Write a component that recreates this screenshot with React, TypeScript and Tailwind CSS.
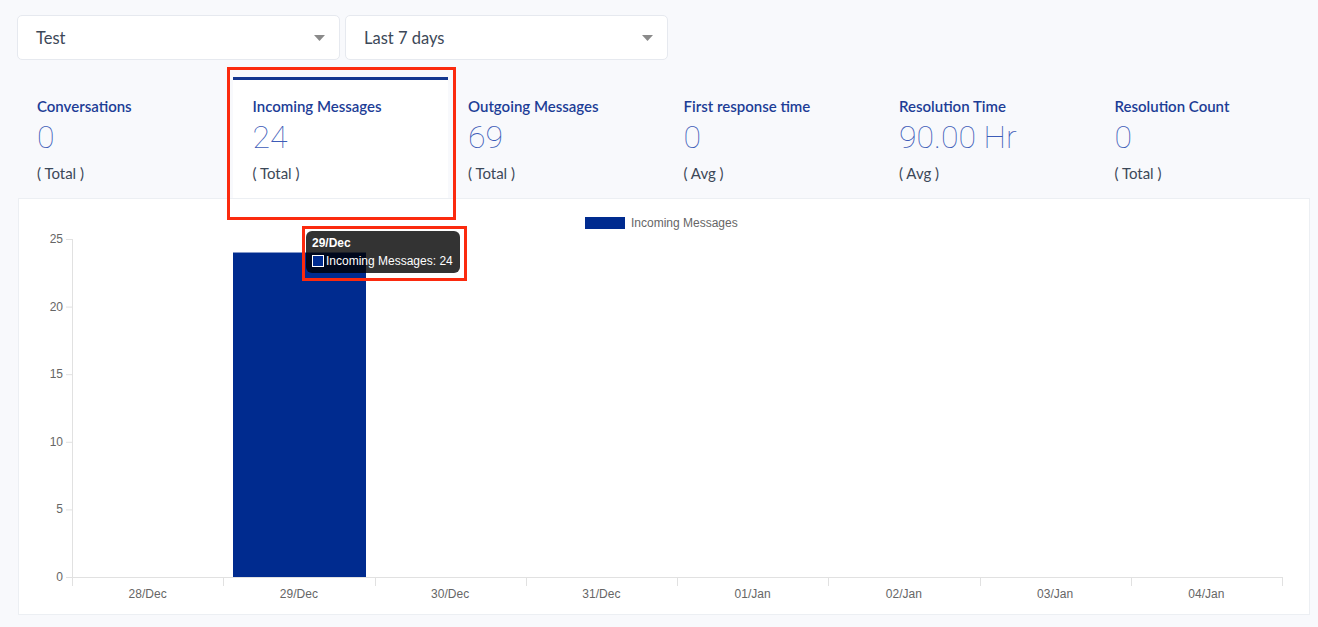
import React from "react";

const metrics = [
  { title: "Conversations", value: "0", sub: "( Total )" },
  { title: "Incoming Messages", value: "24", sub: "( Total )", active: true },
  { title: "Outgoing Messages", value: "69", sub: "( Total )" },
  { title: "First response time", value: "0", sub: "( Avg )" },
  { title: "Resolution Time", value: "90.00 Hr", sub: "( Avg )" },
  { title: "Resolution Count", value: "0", sub: "( Total )" },
];

const xLabels = ["28/Dec", "29/Dec", "30/Dec", "31/Dec", "01/Jan", "02/Jan", "03/Jan", "04/Jan"];
const yLabels = [25, 20, 15, 10, 5, 0];

function Select({ label }: { label: string }) {
  return (
    <div className="flex h-[45px] w-[323px] items-center justify-between rounded-[5px] border border-[#e6e9ef] bg-white pl-[18px] pr-[14px]">
      <span className="pt-[2px] text-[16.5px] text-[#3c4858]" style={{ fontFamily: "Lato, sans-serif" }}>{label}</span>
      <svg width="11" height="6" viewBox="0 0 11 6">
        <polygon points="0,0 11,0 5.5,6" fill="#8a8a8a" />
      </svg>
    </div>
  );
}

function Chart() {
  const left = 54;
  const right = 1264;
  const axisY = 378;
  const top = 40;
  const step = (right - left) / 8;
  const unit = (axisY - top) / 25;
  return (
    <svg width="1292" height="417" className="absolute -left-px top-0" style={{ fontFamily: "'Liberation Sans', Arial, sans-serif" }}>
      <rect x="567" y="18" width="40" height="12" fill="#002b8f" />
      <text x="613" y="28" fontSize="12" fill="#666">Incoming Messages</text>
      <line x1={left + 0.5} y1={top} x2={left + 0.5} y2={axisY + 9} stroke="#e1e1e1" strokeWidth="1" />
      {yLabels.map((v) => {
        const y = axisY - v * unit;
        return (
          <g key={v}>
            <line x1={left - 6} y1={y + 0.5} x2={left} y2={y + 0.5} stroke="#e1e1e1" />
            <text x={left - 9} y={y + 4} fontSize="12" fill="#666" textAnchor="end">{v}</text>
          </g>
        );
      })}
      <rect x={215} y={axisY - 24 * unit} width={133} height={24 * unit} fill="#002b8f" />
      <line x1={left - 6} y1={axisY + 0.5} x2={right} y2={axisY + 0.5} stroke="#e1e1e1" />
      {Array.from({ length: 9 }).map((_, i) => {
        const x = Math.round(left + i * step) + 0.5;
        return <line key={i} x1={x} y1={axisY} x2={x} y2={axisY + 9} stroke="#e1e1e1" />;
      })}
      {xLabels.map((l, i) => (
        <text key={l} x={left + i * step + step / 2} y={399} fontSize="12" fill="#666" textAnchor="middle">{l}</text>
      ))}
    </svg>
  );
}

export default function App() {
  return (
    <div className="min-h-[627px] w-[1318px] overflow-hidden bg-[#f8f9fc] pl-[17px] pt-[15px]" style={{ fontFamily: "Lato, 'Noto Sans', sans-serif" }}>
      <div className="flex gap-[5px]">
        <Select label="Test" />
        <Select label="Last 7 days" />
      </div>
      <div className="mt-[17px] flex w-[1293px]">
        {metrics.map((m) => (
          <div
            key={m.title}
            className={
              m.active
                ? "relative z-10 h-[121px] w-[215.5px] border-t-[3px] border-[#13368f] bg-white pl-[20px] pt-[16px]"
                : "relative h-[121px] w-[215.5px] border-t-[3px] border-transparent pl-[20px] pt-[16px]"
            }
          >
            <div className="text-[15px] font-semibold leading-[20px] text-[#1d3d96]">{m.title}</div>
            <div className="mt-[3px] text-[32px] font-thin leading-[36px] text-[#3d5cb8]" style={{ fontFamily: "Roboto, sans-serif" }}>{m.value}</div>
            <div className="mt-[8px] text-[15px] leading-[20px] text-[#3c4858]">{m.sub}</div>
            {m.active && (
              <div className="pointer-events-none absolute -left-[6px] -right-[8px] -top-[13px] -bottom-[22px] border-[3px] border-[#fb2a0e]" />
            )}
          </div>
        ))}
      </div>
      <div className="relative ml-[1px] h-[417px] w-[1292px] border border-[#eceff3] bg-white">
        <Chart />
        <div className="absolute left-[287px] top-[32px] h-[42px] w-[154px] rounded-[6px] bg-[rgba(0,0,0,0.8)] px-[6px] pt-[5px]" style={{ fontFamily: "'Liberation Sans', Arial, sans-serif" }}>
          <div className="text-[12px] font-bold leading-[14px] text-white">29/Dec</div>
          <div className="mt-[4px] flex items-center text-[12px] leading-[14px] text-white">
            <span className="mr-[2px] h-[12px] w-[12px] border border-white bg-[#002b8f]" />
            <span>Incoming Messages: 24</span>
          </div>
        </div>
        <div className="pointer-events-none absolute left-[283px] top-[27px] h-[55px] w-[165px] border-[3px] border-[#fb2a0e]" />
      </div>
    </div>
  );
}
